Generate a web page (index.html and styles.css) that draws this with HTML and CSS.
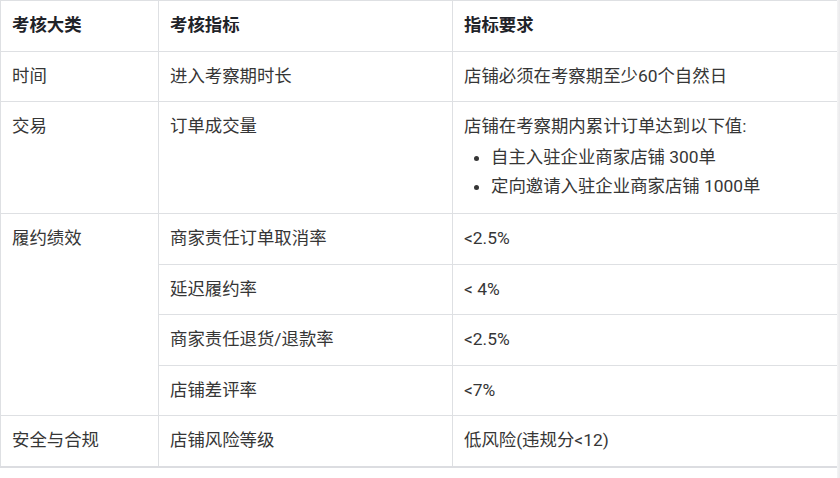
FILE: index.html
```html
<!DOCTYPE html>
<html lang="zh-CN">
<head>
<meta charset="utf-8">
<title>考核指标</title>
<link rel="stylesheet" href="styles.css">
</head>
<body>
<div class="wrap">
  <table class="grid">
    <colgroup>
      <col class="c1">
      <col class="c2">
      <col class="c3">
    </colgroup>
    <thead>
      <tr>
        <th>考核大类</th>
        <th>考核指标</th>
        <th>指标要求</th>
      </tr>
    </thead>
    <tbody>
      <tr>
        <td>时间</td>
        <td>进入考察期时长</td>
        <td>店铺必须在考察期至少60个自然日</td>
      </tr>
      <tr>
        <td>交易</td>
        <td>订单成交量</td>
        <td>
          <div class="lead">店铺在考察期内累计订单达到以下值:</div>
          <ul class="req">
            <li>自主入驻企业商家店铺 300单</li>
            <li>定向邀请入驻企业商家店铺 1000单</li>
          </ul>
        </td>
      </tr>
      <tr>
        <td rowspan="4">履约绩效</td>
        <td>商家责任订单取消率</td>
        <td>&lt;2.5%</td>
      </tr>
      <tr>
        <td>延迟履约率</td>
        <td>&lt; 4%</td>
      </tr>
      <tr>
        <td>商家责任退货/退款率</td>
        <td>&lt;2.5%</td>
      </tr>
      <tr>
        <td>店铺差评率</td>
        <td>&lt;7%</td>
      </tr>
      <tr>
        <td>安全与合规</td>
        <td>店铺风险等级</td>
        <td>低风险(违规分&lt;12)</td>
      </tr>
    </tbody>
  </table>
  <div class="edge"></div>
</div>
</body>
</html>
```

FILE: styles.css
```css
html, body {
  margin: 0;
  padding: 0;
  background: #ffffff;
}

body {
  font-family: Roboto, "Noto Sans CJK SC", "Noto Sans", sans-serif;
  font-size: 17.4px;
  color: #363636;
}

.wrap {
  position: relative;
  width: 840px;
  height: 478px;
  overflow: hidden;
}

.grid {
  border-collapse: collapse;
  table-layout: fixed;
  width: 837px;
  border-bottom: 2px solid #dcdde1;
}

.c1 { width: 158px; }
.c2 { width: 294px; }
.c3 { width: 385px; }

.grid th,
.grid td {
  border: 1px solid #dee0e3;
  padding: 12px 11px;
  line-height: 25.5px;
  text-align: left;
  vertical-align: top;
}

.grid th {
  font-weight: 700;
  color: #1f2329;
}

.lead {
  line-height: 24px;
}

.req {
  margin: 5px 0 0;
  padding-left: 27px;
}

.req li {
  line-height: 29px;
}

.edge {
  position: absolute;
  top: 0;
  right: 0;
  width: 3px;
  height: 478px;
  background: linear-gradient(to right, #f4f4f5, #e9e9eb);
}
```
